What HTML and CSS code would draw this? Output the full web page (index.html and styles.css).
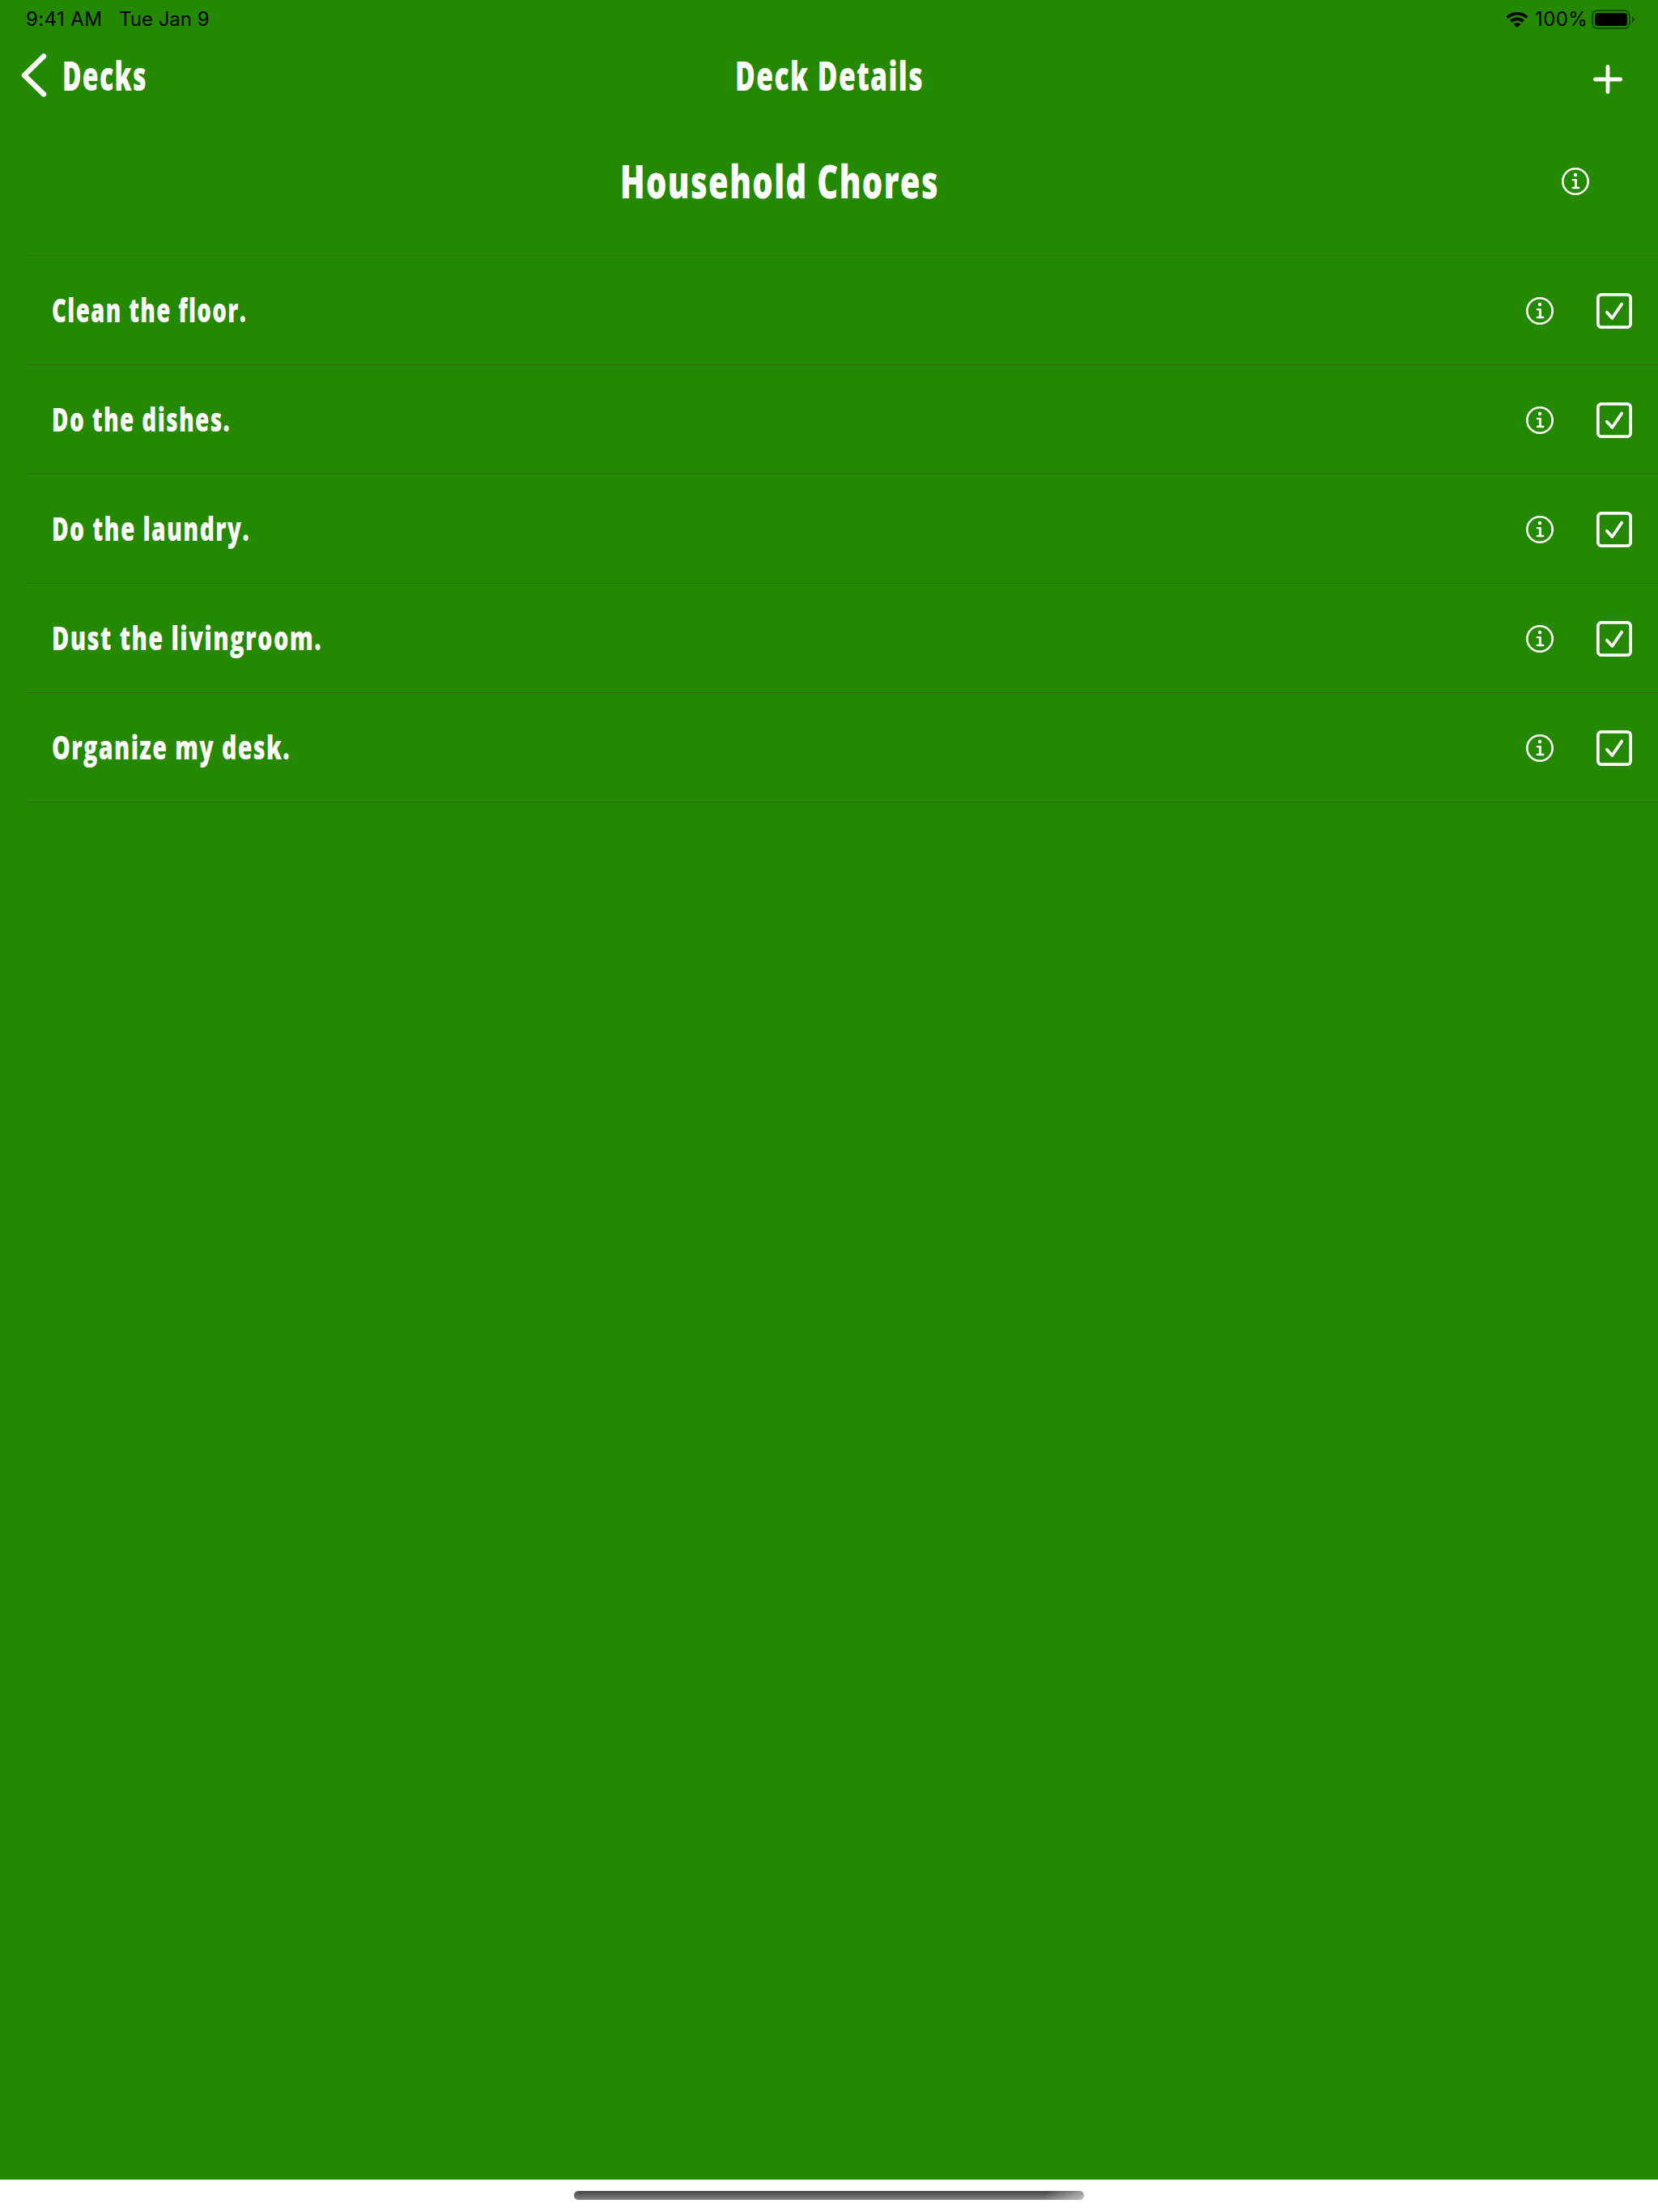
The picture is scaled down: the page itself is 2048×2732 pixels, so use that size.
FILE: index.html
```html
<!DOCTYPE html>
<html lang="en">
<head>
<meta charset="utf-8">
<title>Deck Details</title>
<link rel="stylesheet" href="styles.css">
</head>
<body>
<svg class="symbols" width="0" height="0" aria-hidden="true">
  <symbol id="info" viewBox="0 0 34 34">
    <circle cx="17" cy="17" r="15.7" fill="none" stroke="#fff" stroke-width="2.6"/>
    <circle cx="17" cy="9" r="2.2" fill="#fff"/>
    <path d="M13.8 15.1H17.6V25M13.8 25H21.2" fill="none" stroke="#fff" stroke-width="2.4" stroke-linecap="round" stroke-linejoin="round"/>
    <path d="M17.4 15.2V25" stroke="#fff" stroke-width="3"/>
  </symbol>
  <symbol id="check" viewBox="0 0 44 44">
    <rect x="1.8" y="1.8" width="40.4" height="40.4" rx="4.8" fill="none" stroke="#fff" stroke-width="3.8"/>
    <path d="M12.8 23.7L19.4 31L31.2 13.6" fill="none" stroke="#fff" stroke-width="3.8" stroke-linecap="round" stroke-linejoin="round"/>
  </symbol>
</svg>
<div class="screen">
  <header class="status">
    <div class="status-left"><span class="time">9:41 AM</span><span class="date">Tue Jan 9</span></div>
    <div class="status-right">
      <svg class="wifi" width="28" height="20" viewBox="0 0 28 20">
        <path d="M0.5 6.4A19.3 19.3 0 0 1 27.5 6.4L25 9A15.7 15.7 0 0 0 3 9ZM5.1 11.1A12.8 12.8 0 0 1 22.9 11.1L20.3 13.7A9 9 0 0 0 7.7 13.7ZM9.7 15.8A6.2 6.2 0 0 1 18.3 15.8L14 20Z"/>
      </svg>
      <span class="percent">100%</span>
      <svg class="battery" width="54" height="24" viewBox="0 0 54 24">
        <rect x="1" y="1" width="46" height="22" rx="6.5" fill="none" stroke="#000" stroke-opacity=".4" stroke-width="2"/>
        <rect x="4" y="4" width="40" height="16" rx="3.8"/>
        <path d="M50 8Q53 9.5 53 12T50 16Z" opacity=".45"/>
      </svg>
    </div>
  </header>
  <nav class="nav">
    <div class="back">
      <svg width="32" height="54" viewBox="0 0 32 54"><path d="M28 3.5L4 27L28 50.3" fill="none" stroke="#fff" stroke-width="6.6" stroke-linecap="round" stroke-linejoin="round"/></svg>
      <svg class="label" width="105" height="60"><text class="nav-text" x="-1" y="45.5" textLength="105" lengthAdjust="spacingAndGlyphs">Decks</text></svg>
    </div>
    <svg class="label" width="232" height="60"><text class="nav-text" x="0" y="45.5" textLength="233" lengthAdjust="spacingAndGlyphs">Deck Details</text></svg>
    <svg class="add" width="36" height="36" viewBox="0 0 36 36"><path d="M18 2.4V33.6M2.4 18H33.6" stroke="#fff" stroke-width="4.8" stroke-linecap="round"/></svg>
  </nav>
  <section class="deck">
    <svg class="label deck-name" width="396" height="70"><text class="title-text" x="0" y="50.5" textLength="394" lengthAdjust="spacingAndGlyphs">Household Chores</text></svg>
    <svg class="info"><use href="#info"/></svg>
  </section>
  <main class="list">
    <div class="row"><svg class="label" width="244" height="56"><text class="row-text" x="0" y="42" textLength="241" lengthAdjust="spacingAndGlyphs">Clean the floor.</text></svg><svg class="info"><use href="#info"/></svg><svg class="check"><use href="#check"/></svg></div>
    <div class="row"><svg class="label" width="224" height="56"><text class="row-text" x="0" y="42" textLength="221" lengthAdjust="spacingAndGlyphs">Do the dishes.</text></svg><svg class="info"><use href="#info"/></svg><svg class="check"><use href="#check"/></svg></div>
    <div class="row"><svg class="label" width="248" height="56"><text class="row-text" x="0" y="42" textLength="245" lengthAdjust="spacingAndGlyphs">Do the laundry.</text></svg><svg class="info"><use href="#info"/></svg><svg class="check"><use href="#check"/></svg></div>
    <div class="row"><svg class="label" width="338" height="56"><text class="row-text" x="0" y="42" textLength="334" lengthAdjust="spacingAndGlyphs">Dust the livingroom.</text></svg><svg class="info"><use href="#info"/></svg><svg class="check"><use href="#check"/></svg></div>
    <div class="row"><svg class="label" width="298" height="56"><text class="row-text" x="0" y="42" textLength="295" lengthAdjust="spacingAndGlyphs">Organize my desk.</text></svg><svg class="info"><use href="#info"/></svg><svg class="check"><use href="#check"/></svg></div>
  </main>
</div>
<footer class="home"><div class="home-bar"></div></footer>
</body>
</html>
```
FILE: styles.css
```css
* { box-sizing: border-box; }
body { margin: 0; width: 2048px; height: 2732px; background: #fff; display: flex; flex-direction: column; overflow: hidden; }
svg { display: block; flex: none; }
.symbols { position: absolute; }
.screen { height: 2692px; background: #248900; color: #fff; }
.status { height: 48px; padding: 0 28px 0 32px; display: flex; justify-content: space-between; color: #000; font: 400 24px/48px "Inter", sans-serif; }
.status-left, .status-right { display: flex; align-items: center; white-space: nowrap; }
.status-left { gap: 20px; }
.time { width: 95px; letter-spacing: 0.4px; }
.date { letter-spacing: 0; }
.wifi { margin-right: 8px; }
.percent { width: 70px; letter-spacing: 0.4px; }
.nav { height: 92px; padding: 0 26px; display: grid; grid-template-columns: 1fr 232px 1fr; align-items: start; }
.back { display: flex; gap: 20px; padding-top: 18px; }
.nav .label { margin-top: 18px; }
.back .label { margin-top: 0; }
.add { justify-self: end; margin: 32px 18px 0 0; }
.label { overflow: visible; }
.label text { fill: #fff; font-family: "Open Sans", sans-serif; font-weight: 800; letter-spacing: 2px; }
.label .nav-text { font-size: 49px; }
.label .title-text { font-size: 57px; }
.label .row-text { font-size: 41px; }
.deck { height: 175px; padding: 54px 85px 0 766px; display: flex; justify-content: space-between; }
.deck .info { margin-top: 13px; }
.info { width: 34px; height: 34px; }
.list { margin-left: 32px; border-top: 1px solid #2c7416; }
.row { height: 135px; padding: 1px 32px 0 32px; display: flex; align-items: center; border-bottom: 1px solid #2f6a1d; }
.row .info { margin-left: auto; }
.check { width: 44px; height: 44px; margin-left: 53px; }
.home { height: 40px; display: flex; justify-content: center; padding-top: 14px; }
.home-bar { width: 630px; height: 11px; border-radius: 5.5px; background: linear-gradient(110deg, transparent 92%, #ffffff80 100%), linear-gradient(#454545, #828282); }
```
